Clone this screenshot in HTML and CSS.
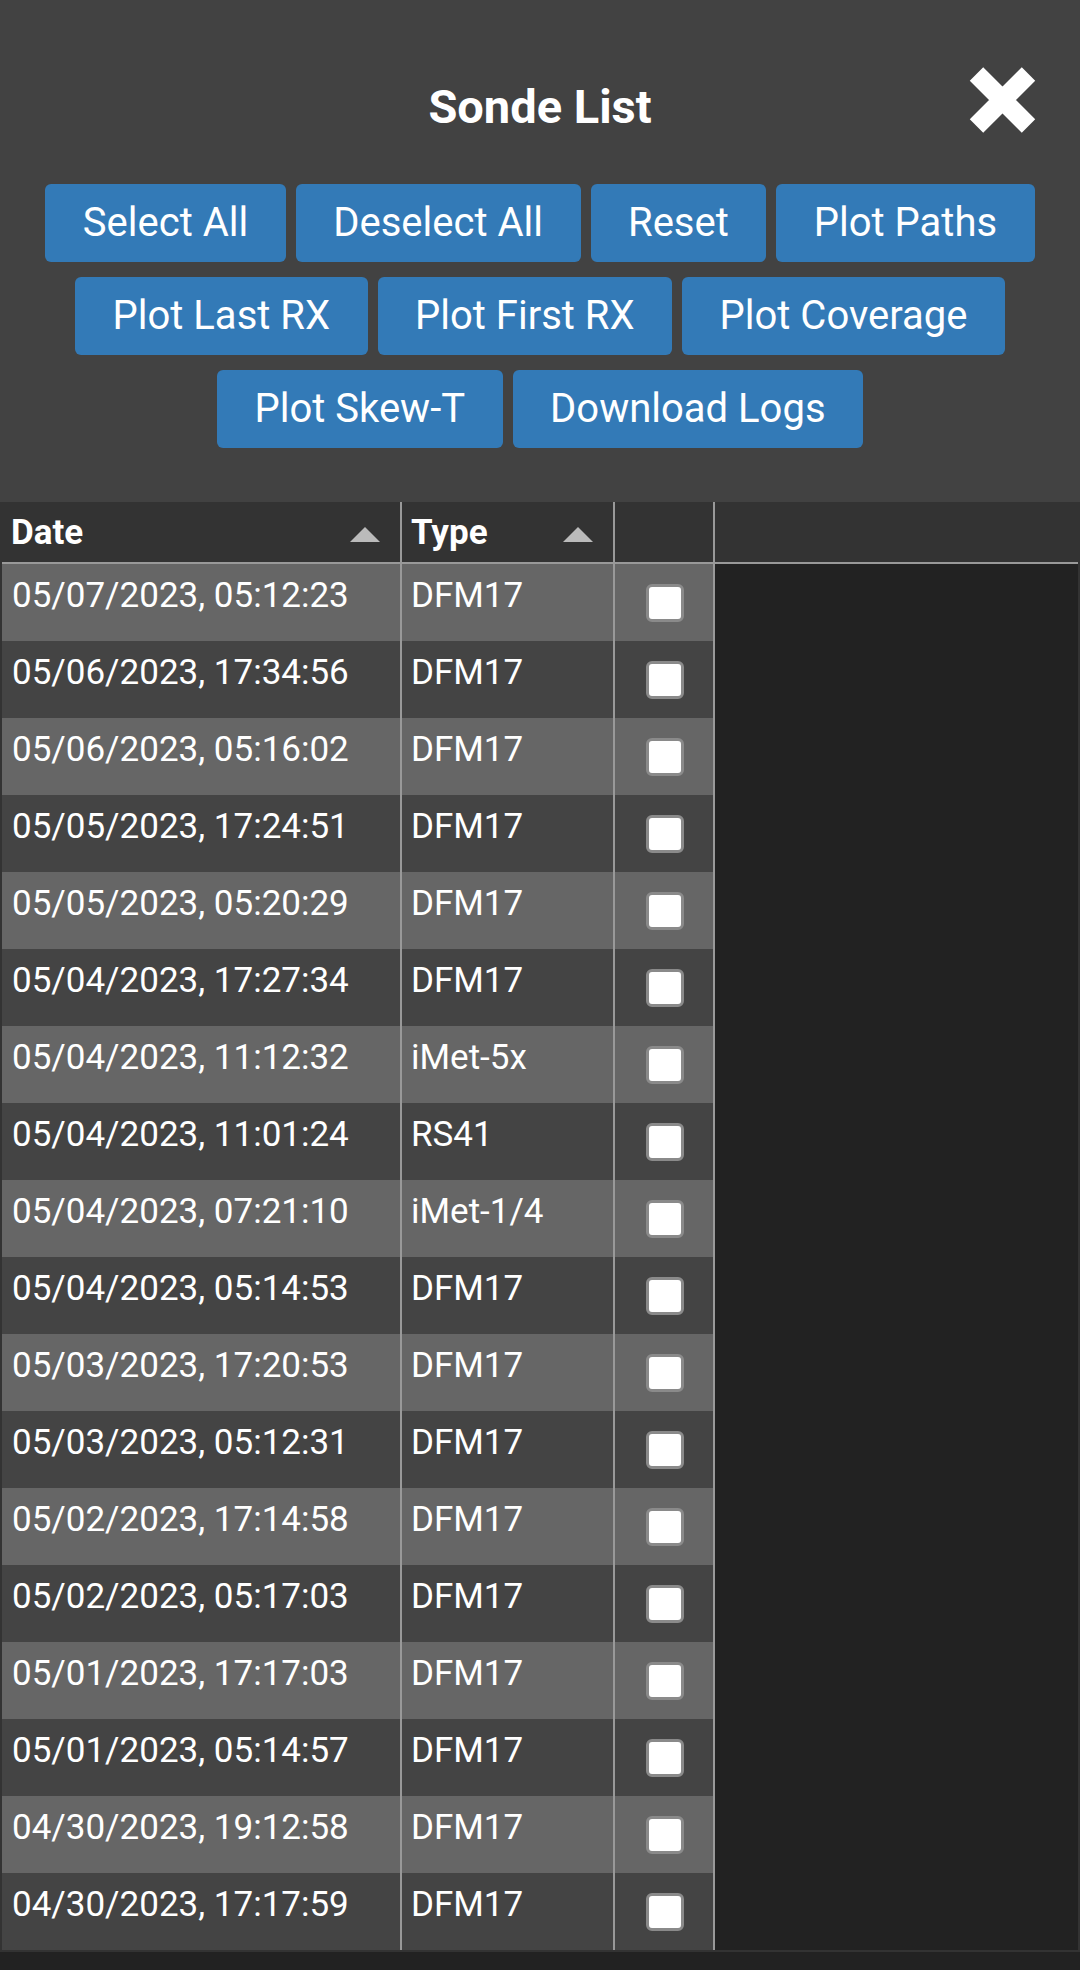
FILE: index.html
```html
<!DOCTYPE html>
<html lang="en">
<head>
  <meta charset="UTF-8" />
  <title>Sonde List</title>
  <link rel="stylesheet" href="styles.css">
</head>
<body>
  <div class="panel">
    <h1 class="panel-title">Sonde List</h1>
    <button class="close-btn" title="Close">
      <svg viewBox="0 0 66 66" width="67" height="66">
        <path d="M7 7 L59 59 M59 7 L7 59" stroke="#fff" stroke-width="19" fill="none" />
      </svg>
    </button>
    <div class="actions">
      <button class="btn">Select All</button>
      <button class="btn">Deselect All</button>
      <button class="btn">Reset</button>
      <button class="btn">Plot Paths</button>
      <button class="btn">Plot Last RX</button>
      <button class="btn">Plot First RX</button>
      <button class="btn">Plot Coverage</button>
      <button class="btn">Plot Skew-T</button>
      <button class="btn">Download Logs</button>
    </div>
  </div>

  <div class="sonde-table">
    <div class="table-header">
      <div class="col col-date"><span>Date</span><i class="sort-arrow"></i></div>
      <div class="col col-type"><span>Type</span><i class="sort-arrow"></i></div>
      <div class="col col-check"></div>
    </div>
    <div class="table-body">
      <div class="row"><div class="cell col-date">05/07/2023, 05:12:23</div><div class="cell col-type">DFM17</div><div class="cell col-check"><input type="checkbox"></div></div>
      <div class="row"><div class="cell col-date">05/06/2023, 17:34:56</div><div class="cell col-type">DFM17</div><div class="cell col-check"><input type="checkbox"></div></div>
      <div class="row"><div class="cell col-date">05/06/2023, 05:16:02</div><div class="cell col-type">DFM17</div><div class="cell col-check"><input type="checkbox"></div></div>
      <div class="row"><div class="cell col-date">05/05/2023, 17:24:51</div><div class="cell col-type">DFM17</div><div class="cell col-check"><input type="checkbox"></div></div>
      <div class="row"><div class="cell col-date">05/05/2023, 05:20:29</div><div class="cell col-type">DFM17</div><div class="cell col-check"><input type="checkbox"></div></div>
      <div class="row"><div class="cell col-date">05/04/2023, 17:27:34</div><div class="cell col-type">DFM17</div><div class="cell col-check"><input type="checkbox"></div></div>
      <div class="row"><div class="cell col-date">05/04/2023, 11:12:32</div><div class="cell col-type">iMet-5x</div><div class="cell col-check"><input type="checkbox"></div></div>
      <div class="row"><div class="cell col-date">05/04/2023, 11:01:24</div><div class="cell col-type">RS41</div><div class="cell col-check"><input type="checkbox"></div></div>
      <div class="row"><div class="cell col-date">05/04/2023, 07:21:10</div><div class="cell col-type">iMet-1/4</div><div class="cell col-check"><input type="checkbox"></div></div>
      <div class="row"><div class="cell col-date">05/04/2023, 05:14:53</div><div class="cell col-type">DFM17</div><div class="cell col-check"><input type="checkbox"></div></div>
      <div class="row"><div class="cell col-date">05/03/2023, 17:20:53</div><div class="cell col-type">DFM17</div><div class="cell col-check"><input type="checkbox"></div></div>
      <div class="row"><div class="cell col-date">05/03/2023, 05:12:31</div><div class="cell col-type">DFM17</div><div class="cell col-check"><input type="checkbox"></div></div>
      <div class="row"><div class="cell col-date">05/02/2023, 17:14:58</div><div class="cell col-type">DFM17</div><div class="cell col-check"><input type="checkbox"></div></div>
      <div class="row"><div class="cell col-date">05/02/2023, 05:17:03</div><div class="cell col-type">DFM17</div><div class="cell col-check"><input type="checkbox"></div></div>
      <div class="row"><div class="cell col-date">05/01/2023, 17:17:03</div><div class="cell col-type">DFM17</div><div class="cell col-check"><input type="checkbox"></div></div>
      <div class="row"><div class="cell col-date">05/01/2023, 05:14:57</div><div class="cell col-type">DFM17</div><div class="cell col-check"><input type="checkbox"></div></div>
      <div class="row"><div class="cell col-date">04/30/2023, 19:12:58</div><div class="cell col-type">DFM17</div><div class="cell col-check"><input type="checkbox"></div></div>
      <div class="row"><div class="cell col-date">04/30/2023, 17:17:59</div><div class="cell col-type">DFM17</div><div class="cell col-check"><input type="checkbox"></div></div>
    </div>
  </div>
</body>
</html>
```

FILE: styles.css
```css
* {
  box-sizing: border-box;
}

body {
  margin: 0;
  min-height: 100vh;
  background-color: #222;
  font-family: Roboto, "Noto Sans", sans-serif;
  color: #fff;
}

.panel {
  position: relative;
  background-color: #424242;
  padding: 80px 20px 54px;
}

.panel-title {
  margin: 0;
  font-size: 47px;
  line-height: 54px;
  font-weight: bold;
  text-align: center;
}

.close-btn {
  position: absolute;
  top: 67px;
  right: 44px;
  padding: 0;
  border: none;
  background: none;
  line-height: 0;
  cursor: pointer;
}

.actions {
  margin-top: 50px;
  display: flex;
  flex-wrap: wrap;
  justify-content: center;
  gap: 15px 10px;
}

.btn {
  font-family: inherit;
  font-size: 40px;
  line-height: 48px;
  padding: 15px 37.5px;
  color: #fff;
  background-color: #337ab7;
  border: none;
  border-radius: 6px;
  cursor: pointer;
}

/* table */
.sonde-table {
  background-color: #222;
  border: 2px solid #333;
  border-top: none;
  font-size: 35px;
}

.table-header {
  display: flex;
  height: 62px;
  background-color: #333;
  border-bottom: 2px solid #999;
  font-weight: bold;
}

.col-date {
  width: 400px;
}

.col-type {
  width: 213px;
}

.col-check {
  width: 100px;
}

.table-header .col {
  display: flex;
  align-items: center;
  justify-content: space-between;
  padding: 0 20px 0 9px;
  border-right: 2px solid #999;
}

.sort-arrow {
  width: 0;
  height: 0;
  margin-top: 4px;
  border-left: 15px solid transparent;
  border-right: 15px solid transparent;
  border-bottom: 15px solid #bbb;
}

.table-body {
  width: max-content;
}

.row {
  display: flex;
  height: 77px;
  background-color: #444;
}

.row:nth-child(odd) {
  background-color: #666;
}

.cell {
  padding: 11px 10px;
  line-height: 41px;
  border-right: 2px solid #999;
  white-space: nowrap;
}

.cell.col-type {
  padding-left: 9px;
}

.cell.col-check {
  display: flex;
  align-items: center;
  justify-content: center;
  padding: 0;
}

.cell input[type="checkbox"] {
  appearance: none;
  -webkit-appearance: none;
  margin: 0 0 0 2px;
  width: 38px;
  height: 38px;
  background-color: #fff;
  border: 3px solid #8a8a8a;
  border-radius: 6px;
}
```
